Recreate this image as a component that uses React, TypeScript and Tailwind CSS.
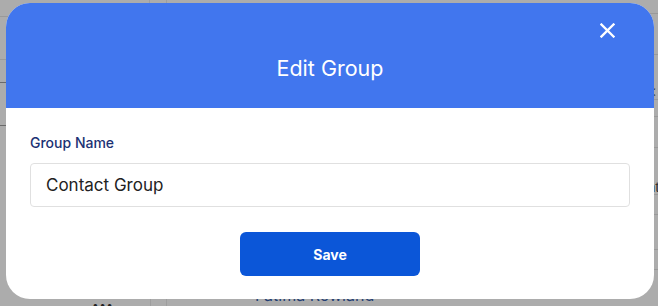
function Backdrop() {
  const leftRows = [17, 43, 23, 43]
  const rightRows = [14, 41, 45, 17, 31, 47, 20, 35, 20]
  return (
    <div className="flex flex-col w-full h-full">
      <div className="flex flex-1 min-h-0">
        <div className="w-[150px] flex flex-col border-r border-[#9e9e9e]">
          {leftRows.map((h, i) => (
            <div
              key={i}
              style={{ height: h }}
              className={i >= 2 ? 'border-b border-[#6a6a6a]' : 'border-b border-[#9a9a9a]'}
            />
          ))}
        </div>
        <div className="w-[17px] border-r border-[#9e9e9e]" />
        <div className="flex-1" />
        <div className="w-[12px] flex flex-col text-[15px] leading-none text-[#333] font-['Liberation_Sans',sans-serif]">
          {rightRows.map((h, i) => (
            <div key={i} style={{ height: h }} className="border-b border-[#9a9a9a] flex items-end pl-[1px]">
              {i === 2 ? '<' : i === 5 ? 'nt' : ''}
            </div>
          ))}
        </div>
      </div>
      <div className="h-[20px] flex shrink-0 font-['Inter',sans-serif]">
        <div className="w-[150px] flex justify-center pt-[14px] pl-[56px] text-[#222] text-[11px] tracking-[1px] leading-none">
          •••
        </div>
        <div className="w-[17px] border-x border-[#9e9e9e]" />
        <div className="flex-1 pl-[88px] text-[16px] leading-[18px] text-[#233f73]">Fatima Rowland</div>
      </div>
    </div>
  )
}

export default function App() {
  return (
    <div className="relative w-[658px] h-[306px] overflow-hidden bg-[#acacac] font-['Inter',sans-serif]">
      <Backdrop />
      <div className="absolute left-[6px] top-[3px] w-[648px] h-[296px] rounded-[24px] bg-white overflow-hidden flex flex-col">
        <div className="relative h-[105px] bg-[#4176ee] flex justify-center pt-[50px] shrink-0">
          <h2 className="text-white text-[21.5px] leading-[30px] font-normal">Edit Group</h2>
          <button className="absolute right-[39px] top-[20px] text-white">
            <svg width="15" height="15" viewBox="0 0 15 15" fill="none" stroke="currentColor" strokeWidth="2.3" strokeLinecap="square">
              <path d="M1.5 1.5 13.5 13.5M13.5 1.5 1.5 13.5" />
            </svg>
          </button>
        </div>
        <div className="flex flex-col px-6 pt-[25px]">
          <label className="text-[14px] leading-[20px] font-medium text-[#1c3274] mb-[10px]">Group Name</label>
          <input
            defaultValue="Contact Group"
            className="h-[44px] w-full border border-[#e0e0e0] rounded-[4px] pl-[15px] text-[17px] text-[#222] outline-none"
          />
          <div className="flex justify-center mt-[25px]">
            <button className="w-[180px] h-[44px] rounded-[6px] bg-[#0b56d8] text-white text-[14px] font-bold">
              Save
            </button>
          </div>
        </div>
      </div>
    </div>
  )
}
